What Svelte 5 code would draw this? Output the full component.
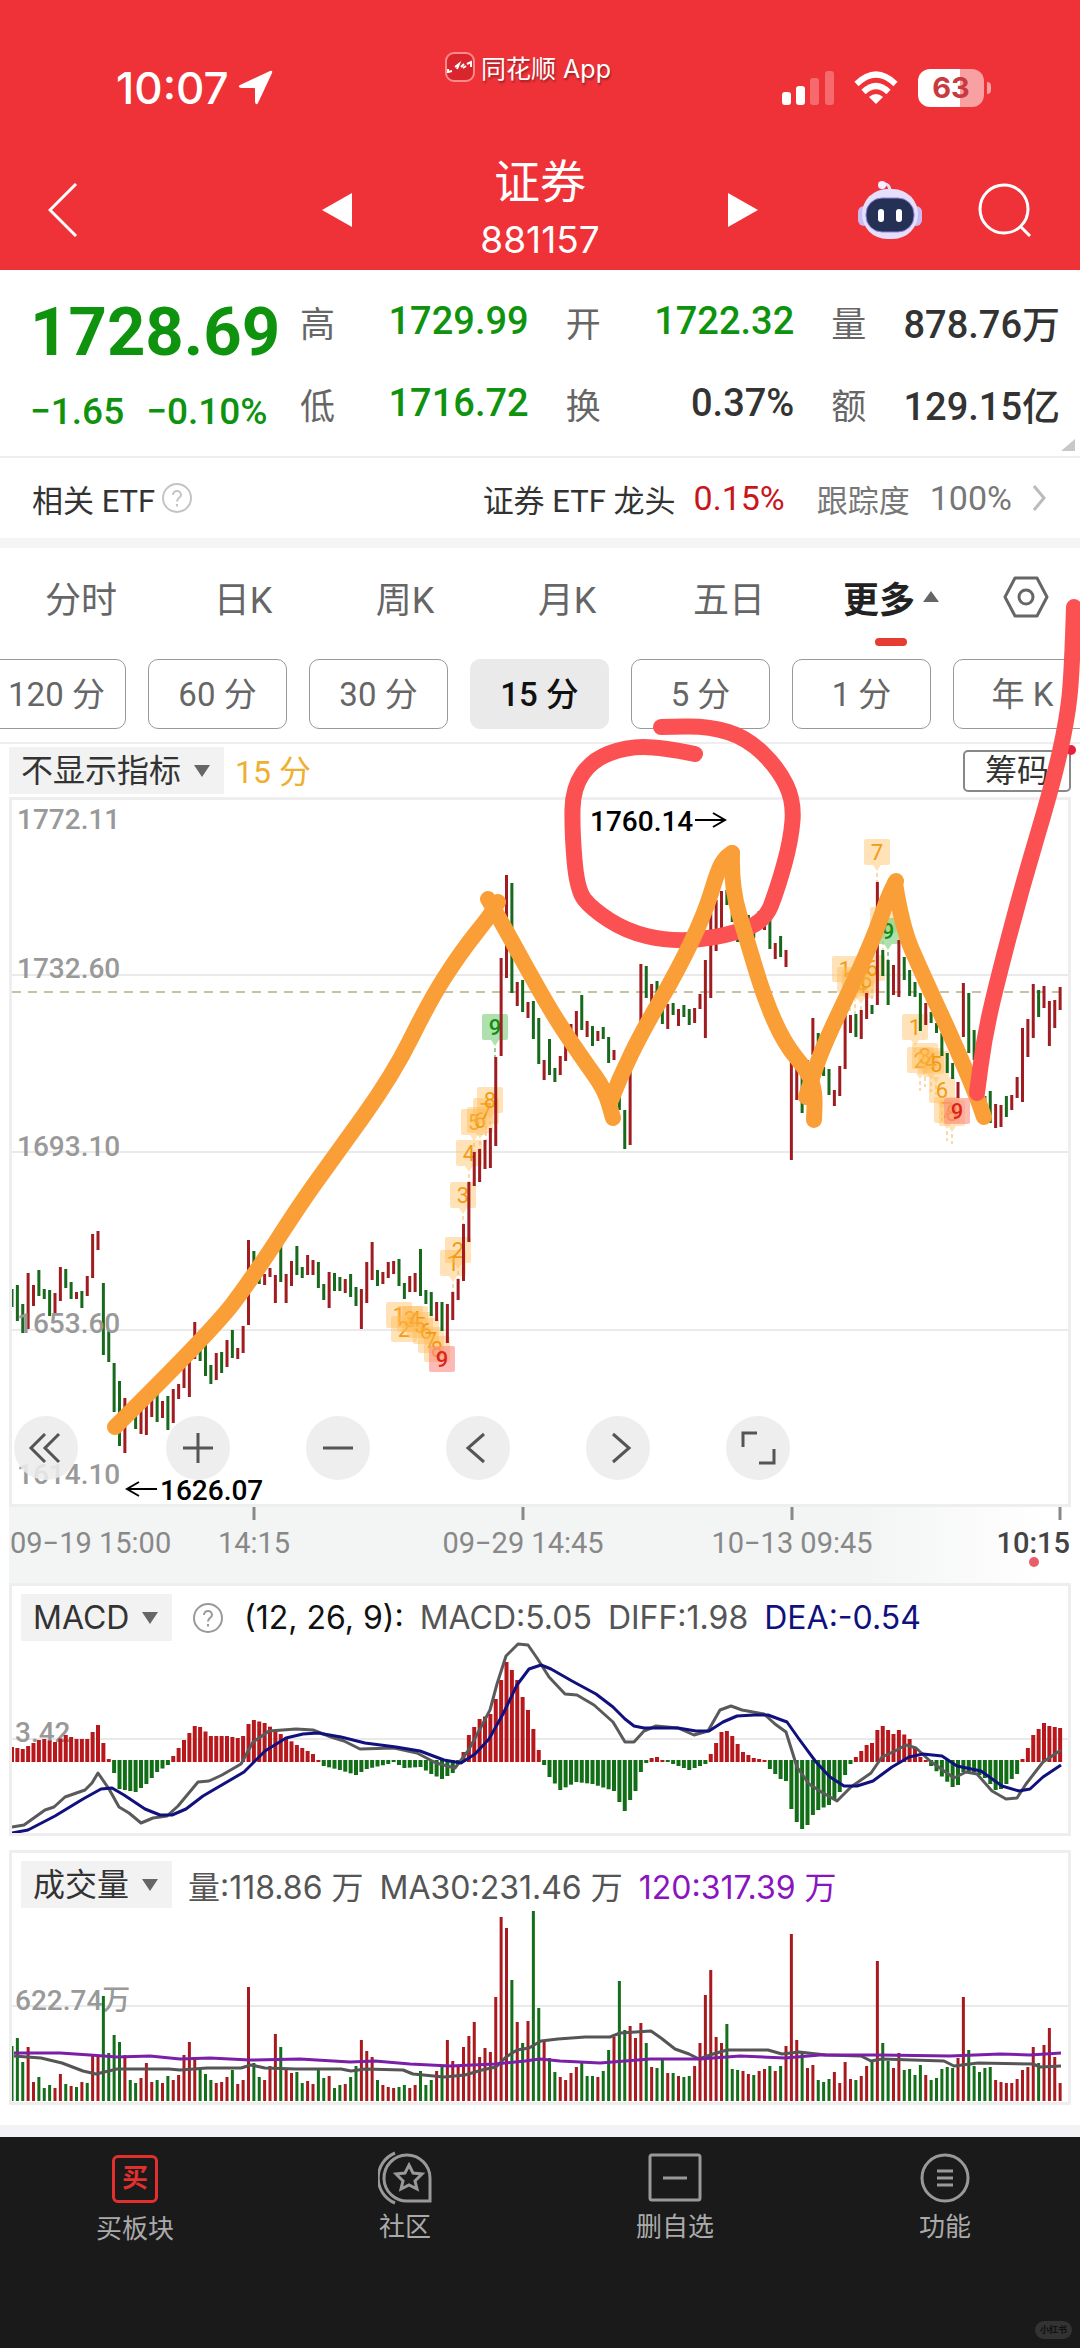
<script lang="ts">
  type Point = [number, number];

  const stats = [
    ['高', '1729.99', 'down'],
    ['开', '1722.32', 'down'],
    ['量', '878.76万', ''],
    ['低', '1716.72', 'down'],
    ['换', '0.37%', ''],
    ['额', '129.15亿', ''],
  ];

  const tabs = ['分时', '日K', '周K', '月K', '五日'];
  const periods = ['120 分', '60 分', '30 分', '15 分', '5 分', '1 分', '年 K'];
  let period: string = $state('15 分');

  // r = rising bar, g = falling bar, followed by top and bottom of the bar
  const candleData = `
    g1289-1307 g1285-1321 g1304-1333 r1273-1329 r1285-1306 g1270-1296 g1289-1299 g1290-1316 r1293-1313 r1267-1301
    g1269-1288 g1282-1299 r1292-1299 g1291-1308 r1276-1296 r1234-1278 r1231-1250 g1283-1355 g1331-1362 g1363-1412
    g1381-1446 r1398-1453 g1407-1420 g1408-1429 r1403-1434 r1395-1435 r1392-1417 g1393-1422 r1401-1418 g1396-1430
    r1389-1423 r1384-1399 r1357-1388 r1350-1397 r1322-1359 g1337-1361 g1345-1376 g1365-1384 r1353-1380 g1352-1373
    r1340-1367 g1330-1358 r1348-1359 r1326-1353 r1240-1325 g1251-1286 g1270-1284 r1274-1285 r1268-1277 r1275-1303
    g1240-1282 r1274-1303 r1261-1286 g1246-1275 g1267-1278 r1255-1275 r1260-1275 g1262-1288 g1284-1300 r1272-1308
    g1273-1291 g1277-1291 r1279-1293 g1274-1297 g1287-1306 r1289-1329 r1262-1303 r1242-1280 g1270-1286 r1272-1284
    r1262-1278 r1261-1274 g1259-1286 g1283-1299 r1276-1292 r1273-1292 g1249-1296 g1290-1304 g1292-1316 r1302-1321
    g1302-1331 r1304-1343 r1292-1320 r1279-1300 r1224-1281 r1182-1242 r1152-1186 r1149-1182 r1140-1169 r1128-1168
    r1057-1146 r958-1056 r875-978 g883-993 r982-1006 g980-1012 r1002-1018 g1001-1039 g1018-1064 r1060-1080
    g1039-1075 g1068-1082 r1056-1075 r1044-1061 r1024-1038 r1011-1037 g995-1030 r1021-1037 g1026-1046 r1031-1041
    g1027-1039 g1037-1063 r1050-1060 g1090-1110 g1110-1149 r1063-1145 r1033-1060 r964-1030 g966-998 r984-1010
    g981-1000 g993-1024 r1004-1029 g1003-1015 r1009-1026 g1005-1017 g1009-1025 r1008-1023 r994-1009 r960-1038
    r913-998 r900-951 r891-930 g890-905 g900-922 g926-942 g928-936 g915-933 g926-938 g911-930
    r915-930 g920-949 r943-959 g936-957 r950-967 r1043-1160 r1053-1100 g1070-1113 r1060-1080 r1018-1055
    g1033-1053 g1067-1076 g1069-1095 r1090-1106 r1066-1096 r1013-1069 r1015-1033 g1014-1037 r1010-1039 r993-1019
    g1005-1014 r882-1005 g950-976 g960-1005 r965-995 r940-997 g957-980 g970-996 g982-997 g993-1031
    r1003-1025 g1012-1023 g1023-1033 g1033-1056 g1053-1073 g1063-1079 r1082-1098 r983-1037 g993-1053 g1030-1060
    r1070-1090 g1096-1110 g1091-1123 r1104-1128 r1105-1127 g1096-1117 r1095-1110 r1077-1098 r1028-1102 r1019-1057
    r984-1038 g990-1017 r986-1008 r1001-1046 r1000-1028 r987-1010`;

  const volumeData = `
    g55 g63 g39 r54 r19 g24 g13 g16 r13 r27 g17 r15 g14 r19 g18 r45 r46 g105 g48 g66
    g59 r46 g21 g18 r23 r38 r19 g21 r18 g25 r21 r26 r46 r59 r44 g33 g27 g21 r18 r19
    r24 g31 r17 r21 r114 g38 g24 r21 r35 r67 g54 r33 r28 g29 g18 r20 r17 g31 g23 r25
    g13 g16 r17 g24 g35 r61 r50 r44 g21 r16 r14 r13 g14 g16 r13 r16 g30 g16 g21 r30
    g36 r61 r40 r35 r54 r65 r79 r44 r53 r49 r104 r184 r173 g121 r79 g58 r80 g190 g93 r61
    g43 g29 r24 r21 r28 r34 g38 g25 g25 r24 g30 g51 r64 g120 g71 r75 r63 r78 g58 r34
    g33 g41 r28 g28 r25 g24 g25 r35 r58 r106 r131 r64 r58 g77 g32 g31 r30 r27 g26 r30
    r32 g35 r30 g35 r55 r167 r61 g50 r33 r36 g21 g19 g22 r29 r18 r39 r22 g21 r25 r35
    g40 r140 g58 g40 r33 r48 g31 g32 g26 g36 r26 g21 g23 g32 g34 g33 r43 r104 g51
    g35 g29 g33 g34 r21 r19 r18 r18 r22 r31 r34 r54 g38 r56 r73 r44 r18`;

  // histogram turning points: bar index, height
  const macdKeys: Point[] = [
    [0, 14], [2, 12], [5, 21], [6, 22], [8, 19], [10, 26], [12, 22], [14, 22], [16, 36], [17, 18], [18, 2], [19, -12],
    [20, -28], [23, -31], [25, -23], [27, -11], [29, -4], [30, 5], [32, 21], [34, 35], [35, 34], [37, 25], [40, 25],
    [42, 23], [43, 25], [44, 37], [45, 41], [47, 38], [50, 27], [53, 16], [56, 7], [57, 1], [58, -5], [61, -9],
    [64, -14], [66, -8], [70, -3], [71, -1], [73, -7], [76, -6], [78, -13], [80, -18], [82, -12], [83, -3], [84, 9],
    [85, 26], [87, 42], [89, 47], [90, 62], [91, 81], [92, 99], [93, 91], [94, 81], [95, 64], [96, 51], [97, 32],
    [98, 11], [99, -4], [100, -16], [102, -29], [105, -21], [108, -23], [112, -30], [113, -41], [114, -50],
    [115, -39], [116, -30], [117, -11], [118, -2], [119, 3], [120, 4], [121, 1], [123, -3], [126, -9], [129, -3],
    [130, 7], [132, 29], [133, 30], [134, 25], [136, 9], [138, 3], [140, 1], [141, -8], [143, -18], [144, -20],
    [145, -48], [146, -61], [147, -68], [148, -64], [149, -54], [150, -49], [152, -44], [153, -39], [154, -31],
    [155, -14], [156, -3], [157, 4], [159, 16], [160, 18], [161, 31], [162, 35], [164, 27], [165, 31], [167, 22],
    [169, 4], [170, 1], [171, -5], [175, -26], [176, -24], [177, -11], [179, -11], [181, -17], [183, -29],
    [184, -28], [185, -23], [187, -13], [188, 2], [189, 13], [190, 26], [192, 38], [193, 35], [195, 33],
  ];

  const diff: Point[] = [
    [12, 1827], [24, 1825], [45, 1810], [54, 1807], [65, 1797], [85, 1790], [92, 1783], [98, 1773], [109, 1789],
    [119, 1807], [129, 1813], [141, 1823], [153, 1818], [167, 1816], [178, 1806], [198, 1782], [209, 1781],
    [222, 1775], [241, 1764], [253, 1742], [269, 1731], [296, 1729], [313, 1730], [331, 1737], [344, 1741],
    [360, 1749], [394, 1748], [417, 1753], [436, 1763], [455, 1768], [468, 1751], [480, 1729], [490, 1710],
    [497, 1684], [506, 1656], [518, 1644], [528, 1645], [537, 1658], [549, 1677], [565, 1694], [577, 1695],
    [594, 1705], [613, 1722], [625, 1742], [634, 1742], [644, 1731], [656, 1726], [678, 1728], [694, 1735],
    [708, 1731], [720, 1710], [731, 1706], [742, 1710], [764, 1714], [775, 1724], [786, 1732], [797, 1767],
    [809, 1784], [823, 1793], [837, 1801], [851, 1787], [871, 1773], [882, 1757], [895, 1751], [906, 1745],
    [916, 1748], [930, 1761], [954, 1778], [966, 1772], [977, 1774], [992, 1791], [1006, 1799], [1017, 1798],
    [1026, 1784], [1043, 1762], [1061, 1750],
  ];
  const dea: Point[] = [
    [12, 1833], [28, 1830], [55, 1816], [83, 1799], [101, 1789], [112, 1788], [124, 1795], [145, 1809], [160, 1815],
    [172, 1815], [186, 1809], [203, 1796], [244, 1772], [265, 1751], [286, 1738], [303, 1734], [318, 1733],
    [341, 1737], [365, 1743], [396, 1747], [420, 1751], [444, 1760], [461, 1763], [475, 1754], [489, 1739],
    [503, 1714], [517, 1685], [529, 1669], [541, 1665], [551, 1669], [572, 1681], [596, 1694], [613, 1707],
    [625, 1719], [634, 1726], [644, 1728], [678, 1728], [696, 1731], [709, 1731], [723, 1722], [737, 1716],
    [754, 1715], [768, 1715], [787, 1722], [799, 1739], [816, 1762], [830, 1777], [844, 1786], [857, 1786],
    [873, 1781], [892, 1767], [909, 1757], [923, 1754], [942, 1756], [957, 1766], [981, 1771], [1002, 1786],
    [1019, 1791], [1030, 1789], [1043, 1777], [1061, 1765],
  ];
  const ma30: Point[] = [
    [14, 2058], [41, 2060], [62, 2065], [83, 2073], [96, 2076], [117, 2071], [169, 2071], [180, 2072], [207, 2070],
    [241, 2070], [251, 2067], [265, 2070], [296, 2071], [341, 2071], [351, 2073], [365, 2071], [403, 2072],
    [413, 2076], [444, 2079], [465, 2077], [482, 2072], [496, 2069], [506, 2059], [517, 2052], [529, 2050],
    [541, 2043], [558, 2041], [585, 2039], [610, 2039], [620, 2035], [651, 2033], [661, 2040], [675, 2051],
    [689, 2056], [699, 2061], [713, 2056], [727, 2052], [768, 2052], [782, 2056], [799, 2054], [826, 2057],
    [861, 2058], [871, 2063], [882, 2061], [944, 2063], [954, 2068], [978, 2065], [1033, 2066], [1040, 2069],
    [1061, 2068],
  ];
  const ma120: Point[] = [
    [14, 2055], [60, 2055], [90, 2057], [117, 2059], [150, 2058], [180, 2061], [210, 2060], [250, 2062], [300, 2061],
    [350, 2064], [375, 2063], [410, 2066], [450, 2068], [495, 2066], [525, 2063], [540, 2061], [560, 2063],
    [600, 2065], [650, 2061], [700, 2061], [740, 2058], [785, 2060], [820, 2057], [880, 2057], [950, 2058],
    [1000, 2056], [1030, 2057], [1061, 2055],
  ];

  // nine-turn markers: left, top, count, kind
  const markers: [number, number, number, string][] = [
    [386, 1302, 1, 'mid'], [391, 1316, 2, 'mid'], [397, 1306, 3, 'mid'], [402, 1306, 4, 'mid'], [407, 1312, 5, 'mid'],
    [413, 1318, 6, 'mid'], [418, 1327, 7, 'mid'], [424, 1336, 8, 'mid'], [429, 1346, 9, 'low'],
    [440, 1250, 1, 'mid'], [445, 1237, 2, 'mid'], [450, 1182, 3, 'mid'], [456, 1140, 4, 'mid'], [461, 1109, 5, 'mid'],
    [467, 1107, 6, 'mid'], [473, 1098, 7, 'mid'], [477, 1087, 8, 'mid'], [482, 1014, 9, 'high'],
    [832, 956, 1, 'mid'], [837, 967, 2, 'mid'], [842, 970, 3, 'mid'], [848, 972, 4, 'mid'], [853, 967, 5, 'mid'],
    [859, 955, 6, 'mid'], [864, 839, 7, 'mid'], [870, 907, 8, 'mid'], [875, 918, 9, 'high'],
    [902, 1014, 1, 'mid'], [907, 1047, 2, 'mid'], [912, 1043, 3, 'mid'], [918, 1048, 4, 'mid'], [923, 1051, 5, 'mid'],
    [929, 1077, 6, 'mid'], [934, 1097, 7, 'mid'], [939, 1100, 8, 'mid'], [944, 1098, 9, 'low'],
  ];

  const ring: Point[] = [
    [695, 754], [661, 747], [626, 747], [592, 760], [573, 788], [572, 830], [577, 890], [592, 909], [626, 931],
    [667, 941], [712, 939], [764, 924], [778, 887], [791, 840], [794, 801], [778, 768], [747, 738], [709, 726],
    [661, 727],
  ];
  const rise: Point[] = [
    [1074, 607], [1072, 673], [1067, 720], [1053, 783], [1022, 887], [995, 990], [984, 1040], [977, 1093],
  ];
  const waves: Point[][] = [
    [[115, 1427], [213, 1330], [253, 1277], [303, 1200], [332, 1160], [393, 1075], [430, 1000], [461, 952], [492, 913], [498, 902]],
    [[488, 899], [497, 914], [540, 992], [561, 1027], [585, 1062], [605, 1090], [613, 1118]],
    [[611, 1100], [620, 1077], [643, 1030], [678, 970], [705, 913], [718, 870], [725, 858], [732, 853]],
    [[732, 853], [731, 887], [747, 940], [764, 997], [784, 1043], [809, 1073], [815, 1093], [814, 1120]],
    [[806, 1097], [812, 1077], [826, 1040], [850, 990], [874, 937], [888, 897], [896, 881]],
    [[895, 883], [902, 927], [922, 973], [953, 1040], [977, 1097], [984, 1117]],
  ];

  const barX = (i: number) => 12 + i * 5.375;

  const candles = candleData.trim().split(/\s+/).map((token, i) => {
    const [top, bottom] = token.slice(1).split('-').map(Number);
    return { x: barX(i), top, bottom, up: token[0] === 'r' };
  });

  const volumes = volumeData.trim().split(/\s+/).map((token, i) => ({
    x: barX(i),
    height: Number(token.slice(1)),
    up: token[0] === 'r',
  }));

  const histogram = candles.map((bar, i) => {
    const next = Math.max(1, macdKeys.findIndex((key) => key[0] >= i));
    const [x0, h0] = macdKeys[next - 1];
    const [x1, h1] = macdKeys[next];
    return { x: bar.x, height: h0 + ((h1 - h0) * (i - x0)) / (x1 - x0) };
  });

  function line(points: Point[]): string {
    return points.map((p) => p.join(',')).join(' ');
  }

  // Curve through the midpoints of the given points
  function smooth(points: Point[]): string {
    let d = `M${points[0][0]} ${points[0][1]}`;
    for (let i = 1; i < points.length - 1; i++) {
      const [x, y] = points[i];
      const [nx, ny] = points[i + 1];
      d += ` Q${x} ${y} ${(x + nx) / 2} ${(y + ny) / 2}`;
    }
    const last = points[points.length - 1];
    return `${d} L${last[0]} ${last[1]}`;
  }
</script>

{#snippet help()}
  <svg class="help" viewBox="0 0 32 32" aria-hidden="true">
    <circle cx="16" cy="16" r="14" />
    <path d="M12 13 C12 7.500 20 7.500 20 13 C20 16 16 15.500 16 19.500 M16 22 V24.500" />
  </svg>
{/snippet}

{#snippet caret()}
  <svg class="caret" viewBox="0 0 16 12" aria-hidden="true"><path d="M0 0H16L8 12Z" /></svg>
{/snippet}

<div class="page">
  <header>
    <div class="status">
      <div class="clock">
        <span>10:07</span>
        <svg width="36" height="36" viewBox="0 0 36 36" aria-hidden="true">
          <path d="M33 1Q36 0 35 3L21 33Q19 36 18 32V19Q18 18 17 18H4Q0 17 3 15Z" fill="#fff" />
        </svg>
      </div>
      <div class="source">
        <svg width="30" height="30" viewBox="0 0 30 30" aria-hidden="true">
          <rect x="1" y="1" width="28" height="28" rx="8" fill="#d9252d" stroke="#ff8a8a" stroke-width="2" />
          <path d="M3 20L7 19M10 15L14 12L12 17M16 15L19 12M18 16L21 14M22 12L26 10V15M3 17V21" stroke="#fff" stroke-width="2" fill="none" />
        </svg>
        <span>同花顺 App</span>
      </div>
      <div class="signals">
        <svg width="52" height="36" viewBox="0 0 52 36" aria-hidden="true">
          <rect x="0" y="22" width="9" height="13" rx="3" fill="#fff" />
          <rect x="14" y="16" width="9" height="19" rx="3" fill="#fff" />
          <rect x="28" y="8" width="9" height="27" rx="3" fill="#f66a6e" />
          <rect x="43" y="1" width="9" height="34" rx="3" fill="#f66a6e" />
        </svg>
        <svg width="44" height="34" viewBox="0 0 44 34" fill="none" stroke="#fff" stroke-width="6" aria-hidden="true">
          <path d="M2.500 13Q22 -6 41.500 13" />
          <path d="M9.500 21Q22 9 34.500 21" />
          <path d="M22 33L15 26Q22 20 29 26Z" fill="#fff" stroke="none" />
        </svg>
        <div class="battery"><span>63</span></div>
      </div>
    </div>
    <div class="titlebar">
      <button class="back" aria-label="返回">
        <svg width="30" height="54" viewBox="0 0 30 54"><path d="M28 1L2 27L28 53" fill="none" stroke="#fff" stroke-width="3" /></svg>
      </button>
      <div class="switcher">
        <button aria-label="上一个">
          <svg width="30" height="34" viewBox="0 0 30 34"><path d="M30 0V34L0 17Z" fill="#fff" /></svg>
        </button>
        <h1>证券<small>881157</small></h1>
        <button aria-label="下一个">
          <svg width="30" height="34" viewBox="0 0 30 34"><path d="M0 0V34L30 17Z" fill="#fff" /></svg>
        </button>
      </div>
      <div class="tools">
        <button aria-label="助手">
          <svg width="64" height="60" viewBox="0 0 64 60">
            <path d="M25 4Q32 3 32 12" fill="none" stroke="#e9dcfb" stroke-width="3" />
            <circle cx="24" cy="5" r="4" fill="#f7efff" />
            <rect x="0" y="26" width="12" height="20" rx="6" fill="#c9bbf4" />
            <rect x="52" y="26" width="12" height="20" rx="6" fill="#c9bbf4" />
            <rect x="4" y="9" width="56" height="50" rx="25" fill="#e6dffc" />
            <rect x="8" y="18" width="48" height="34" rx="16" fill="#243154" stroke="#8b82d8" stroke-width="1" />
            <rect x="20" y="29" width="6" height="13" rx="3" fill="#fff" />
            <rect x="38" y="29" width="6" height="13" rx="3" fill="#fff" />
          </svg>
        </button>
        <button aria-label="搜索">
          <svg width="54" height="54" viewBox="0 0 54 54" fill="none" stroke="#fff" stroke-width="3">
            <circle cx="26" cy="26" r="24" />
            <path d="M42 43L52 53" />
          </svg>
        </button>
      </div>
    </div>
  </header>

  <section class="quote">
    <div class="price">
      <strong>1728.69</strong>
      <div class="change"><span>−1.65</span><span>−0.10%</span></div>
    </div>
    <dl>
      {#each stats as [label, value, tone]}
        <div><dt>{label}</dt><dd class={tone}>{value}</dd></div>
      {/each}
    </dl>
    <svg class="corner" viewBox="0 0 14 12" aria-hidden="true"><path d="M14 0V12H0Z" fill="#c8c8c8" /></svg>
  </section>

  <a class="etf" href="#etf">
    <span class="dark">相关 ETF</span>
    {@render help()}
    <span class="dark lead">证券 ETF 龙头</span>
    <span class="rate">0.15%</span>
    <span>跟踪度</span>
    <span class="track">100%</span>
    <svg class="more" viewBox="0 0 14 28" aria-hidden="true"><path d="M2 2L12 14L2 26" /></svg>
  </a>

  <nav class="tabs">
    {#each tabs as tab}
      <button>{tab}</button>
    {/each}
    <button class="active">更多<svg width="16" height="11" viewBox="0 0 16 11" aria-hidden="true"><path d="M0 11H16L8 0Z" fill="#666" /></svg></button>
    <button class="settings" aria-label="设置">
      <svg width="46" height="42" viewBox="0 0 46 42" fill="none" stroke="#666" stroke-width="3">
        <path d="M12 2H34L44 21L34 40H12L2 21Z" stroke-linejoin="round" />
        <circle cx="23" cy="21" r="7" />
      </svg>
    </button>
  </nav>

  <div class="periods">
    {#each periods as name}
      <button class:selected={name === period} onclick={() => (period = name)}>{name}</button>
    {/each}
  </div>

  <div class="indicator">
    <div class="picker">
      <select aria-label="主图指标"><option>不显示指标</option></select>
      {@render caret()}
    </div>
    <span class="current">15 分</span>
    <button class="chips">筹码</button>
  </div>

  <section class="panel price-panel">
    <svg class="plot" viewBox="12 800 1056 704">
      <g class="grid">
        <path d="M12 975H1068M12 1152H1068M12 1330H1068" />
      </g>
      <path d="M12 992H1068" stroke="#c9c2a0" stroke-width="2" stroke-dasharray="9 7" />
      {#each markers as [x, y, count, kind]}
        <g class="marker {kind}">
          {#if kind !== 'low' && y < 1300}
            <path d="M{x + 9} {y + 26}H{x + 17}L{x + 13} {y + 32}Z" />
            <path class="stem" d="M{x + 13} {y + 34}V{y + 44}" />
          {/if}
          <rect {x} {y} width="26" height="26" rx="2" />
          <text x={x + 13} y={y + 21}>{count}</text>
        </g>
      {/each}
      {#each candles as bar}
        <rect x={bar.x - 1.5} y={bar.top} width="3" height={bar.bottom - bar.top} fill={bar.up ? '#a01c20' : '#17691b'} />
      {/each}
      <g class="scale">
        <text x="17" y="829">1772.11</text>
        <text x="17" y="978">1732.60</text>
        <text x="17" y="1156">1693.10</text>
        <text x="17" y="1333">1653.60</text>
        <text x="17" y="1484">1614.10</text>
      </g>
      <g class="extreme">
        <text x="590" y="831">1760.14</text>
        <path d="M695 820H725M713 813L725 820L713 827" />
        <text x="160" y="1500">1626.07</text>
        <path d="M157 1489H127M139 1482L127 1489L139 1496" />
      </g>
    </svg>
    <div class="controls">
      <button aria-label="收起"><svg viewBox="0 0 64 64"><path d="M31 18L17 32L31 46M45 18L31 32L45 46" /></svg></button>
      <button aria-label="放大"><svg viewBox="0 0 64 64"><path d="M17 32H47M32 17V47" /></svg></button>
      <button aria-label="缩小"><svg viewBox="0 0 64 64"><path d="M17 32H47" /></svg></button>
      <button aria-label="左移"><svg viewBox="0 0 64 64"><path d="M38 18L22 32L38 46" /></svg></button>
      <button aria-label="右移"><svg viewBox="0 0 64 64"><path d="M27 18L43 32L27 46" /></svg></button>
      <button aria-label="全屏"><svg viewBox="0 0 64 64"><path d="M17 31V17H31M33 47H48V33" /></svg></button>
    </div>
  </section>

  <svg class="axis" viewBox="9 1507 1062 76">
    <path d="M254 1507V1520M523 1507V1520M792 1507V1520M1060 1507V1520" stroke="#888" stroke-width="3" />
    <text x="10" y="1553">09−19 15:00</text>
    <text x="254" y="1553" text-anchor="middle">14:15</text>
    <text x="523" y="1553" text-anchor="middle">09−29 14:45</text>
    <text x="792" y="1553" text-anchor="middle">10−13 09:45</text>
    <text class="now" x="1070" y="1553" text-anchor="end">10:15</text>
    <circle cx="1034" cy="1562" r="5" fill="#e65f6a" />
  </svg>

  <section class="panel">
    <div class="legend">
      <div class="picker">
        <select aria-label="副图指标"><option>MACD</option></select>
        {@render caret()}
      </div>
      {@render help()}
      <span class="params">(12, 26, 9):</span>
      <span>MACD:5.05</span>
      <span>DIFF:1.98</span>
      <span class="dea">DEA:-0.54</span>
    </div>
    <svg class="plot" viewBox="12 1641 1056 192">
      <path class="grid" d="M12 1739H1068" />
      <g class="scale"><text x="15" y="1742">3.42</text></g>
      {#each histogram as bar}
        <rect
          x={bar.x - 2}
          y={bar.height > 0 ? 1761 - bar.height : 1760}
          width="4"
          height={Math.abs(bar.height) + 1}
          fill={bar.height > 0 ? '#b8181c' : '#116e16'}
        />
      {/each}
      <polyline points={line(diff)} stroke="#5a5a5a" />
      <polyline points={line(dea)} stroke="#10107e" />
    </svg>
  </section>

  <section class="panel volume">
    <div class="legend">
      <div class="picker">
        <select aria-label="成交量指标"><option>成交量</option></select>
        {@render caret()}
      </div>
      <span>量:118.86 万</span>
      <span>MA30:231.46 万</span>
      <span class="ma120">120:317.39 万</span>
    </div>
    <svg class="plot" viewBox="12 1910 1056 194">
      <path class="grid" d="M12 2008H1068" />
      <g class="scale"><text x="15" y="2012">622.74万</text></g>
      {#each volumes as bar}
        <rect x={bar.x - 1.5} y={2103 - bar.height} width="3" height={bar.height} fill={bar.up ? '#a9191d' : '#146f1a'} />
      {/each}
      <polyline points={line(ma30)} stroke="#555" />
      <polyline points={line(ma120)} stroke="#7b1fa8" />
    </svg>
  </section>

  <footer>
    <a class="buy" href="#buy">
      <span class="glyph">买</span>
      买板块
    </a>
    <a href="#community">
      <svg width="54" height="54" viewBox="0 0 54 54">
        <path d="M52 50H30A23 23 0 1 1 52 27Z" />
        <path d="M17 2A27 27 0 0 0 17 52" />
        <path d="M31 14L35 22L44 23L37 30L39 38L31 34L23 38L25 30L18 23L27 22Z" />
      </svg>
      社区
    </a>
    <a href="#remove">
      <svg width="54" height="54" viewBox="0 0 54 54"><rect x="2" y="4" width="50" height="45" rx="2" /><path d="M15 27H39" /></svg>
      删自选
    </a>
    <a href="#features">
      <svg width="54" height="54" viewBox="0 0 54 54"><circle cx="27" cy="27" r="23" /><path d="M19 20H35M19 27H35M19 34H35" /></svg>
      功能
    </a>
    <span class="badge">小红书</span>
  </footer>

  <svg class="notes" viewBox="0 0 1080 2348" aria-hidden="true">
    <circle cx="1071" cy="750" r="5" fill="#e8203c" />
    <path d={smooth(ring)} stroke="#fb5152" />
    {#each waves as wave}
      <path d={smooth(wave)} stroke="#fa9f38" />
    {/each}
    <path d={smooth(rise)} stroke="#fb5152" />
  </svg>
</div>

<style>
  :global(body) {
    margin: 0;
    background: #fff;
  }

  .page {
    position: relative;
    display: flex;
    flex-direction: column;
    min-height: 100vh;
    overflow: hidden;
    color: #333;
    font-family: Roboto, 'Noto Sans CJK SC', sans-serif;
  }

  button {
    padding: 0;
    border: 0;
    background: none;
    color: inherit;
    font: inherit;
    cursor: pointer;
  }

  svg {
    display: block;
    flex: none;
  }

  a {
    color: inherit;
    text-decoration: none;
  }

  header {
    height: 270px;
    background: #ef3138;
    color: #fff;
  }

  .status {
    display: grid;
    grid-template-columns: 1fr auto 1fr;
    align-items: center;
    height: 120px;
    padding: 56px 96px 0 116px;
    box-sizing: border-box;
    font-family: Inter, 'Noto Sans CJK SC', sans-serif;
  }

  .clock {
    display: flex;
    align-items: center;
    gap: 8px;
    font-size: 44px;
    font-weight: 500;
  }

  .source {
    display: flex;
    align-items: center;
    align-self: start;
    gap: 6px;
    height: 22px;
    margin-right: 44px;
    font-size: 25px;
    text-shadow: 1px 2px 2px rgba(0, 0, 0, 0.35);
  }

  .signals {
    display: flex;
    align-items: center;
    justify-content: flex-end;
    gap: 20px;
  }

  .battery {
    position: relative;
    width: 66px;
    border-radius: 12px;
    background: linear-gradient(90deg, #fff 63%, #f9a0a3 63%);
    color: #c93a40;
    font-size: 29px;
    font-weight: 700;
    line-height: 38px;
    text-align: center;
  }

  .battery::after {
    content: '';
    position: absolute;
    top: 13px;
    right: -7px;
    width: 4px;
    height: 12px;
    border-radius: 0 4px 4px 0;
    background: #f9a0a3;
  }

  .titlebar {
    display: grid;
    grid-template-columns: 1fr auto 1fr;
    align-items: center;
    height: 150px;
    padding: 0 48px;
  }

  .back {
    justify-self: start;
    padding-top: 30px;
  }

  .switcher {
    display: flex;
    align-items: center;
    justify-content: space-between;
    width: 436px;
  }

  .switcher button {
    padding-top: 30px;
  }

  h1 {
    margin: 0;
    padding-top: 30px;
    font-size: 46px;
    font-weight: 400;
    line-height: 60px;
    text-align: center;
  }

  h1 small {
    display: block;
    font-family: Inter, sans-serif;
    font-size: 37px;
    line-height: 56px;
  }

  .tools {
    display: flex;
    align-items: center;
    justify-content: flex-end;
    gap: 56px;
    padding-top: 30px;
  }

  .quote {
    position: relative;
    display: flex;
    height: 188px;
    border-bottom: 2px solid #eee;
    box-sizing: border-box;
  }

  .price {
    width: 300px;
    padding: 22px 0 0 30px;
    box-sizing: border-box;
    color: #0f930f;
    font-weight: 500;
  }

  .price strong {
    display: block;
    font-size: 67px;
    font-weight: 700;
    line-height: 80px;
  }

  .change {
    display: flex;
    gap: 22px;
    font-size: 37px;
    line-height: 80px;
  }

  dl {
    display: grid;
    flex: 1;
    grid-template-columns: 1fr 1fr 1fr;
    grid-auto-rows: 82px;
    column-gap: 37px;
    margin: 0;
    padding: 10px 20px 0 0;
  }

  dl div {
    display: flex;
    align-items: center;
    justify-content: space-between;
  }

  dt {
    color: #666;
    font-size: 35px;
  }

  dd {
    margin: 0;
    font-size: 38px;
    font-weight: 500;
    white-space: nowrap;
  }

  dd.down {
    color: #0f930f;
  }

  .corner {
    position: absolute;
    right: 5px;
    bottom: 5px;
    width: 14px;
  }

  .etf {
    display: flex;
    align-items: center;
    height: 80px;
    padding: 0 34px 0 32px;
    border-bottom: 10px solid #f5f5f5;
    color: #777;
    font-size: 31px;
  }

  .help {
    width: 32px;
    fill: none;
    stroke: #999;
    stroke-width: 2;
  }

  .etf .help {
    margin-left: 6px;
    stroke: #c4c4c4;
  }

  .dark {
    color: #333;
  }

  .lead {
    margin-left: auto;
  }

  .rate {
    margin: 0 32px 0 18px;
    color: #c8161d;
    font-size: 34px;
  }

  .track {
    margin: 0 20px;
    font-size: 34px;
  }

  .more {
    width: 14px;
    fill: none;
    stroke: #bbb;
    stroke-width: 3;
  }

  .tabs {
    display: grid;
    grid-template-columns: repeat(6, 3fr) 2fr;
    height: 102px;
    color: #666;
    font-size: 36px;
  }

  .tabs button {
    padding-bottom: 5px;
  }

  .tabs .active {
    position: relative;
    display: flex;
    align-items: center;
    justify-content: center;
    gap: 8px;
    color: #222;
    font-weight: 700;
  }

  .active::after {
    content: '';
    position: absolute;
    bottom: 4px;
    left: 50%;
    width: 32px;
    height: 8px;
    margin-left: -16px;
    border-radius: 4px;
    background: #e63c32;
  }

  .settings svg {
    margin: 0 auto;
  }

  .periods {
    display: flex;
    gap: 22px;
    height: 70px;
    margin: 9px 0 13px -13px;
  }

  .periods button {
    flex: 0 0 139px;
    padding-bottom: 5px;
    border: 1px solid #999;
    border-radius: 10px;
    box-sizing: border-box;
    color: #666;
    font-size: 33px;
  }

  .periods .selected {
    border-color: #eaeaea;
    background: #eaeaea;
    color: #111;
    font-weight: 500;
  }

  .indicator {
    display: flex;
    align-items: center;
    gap: 11px;
    height: 55px;
    padding: 0 9px;
    border-top: 2px solid #eee;
    box-sizing: border-box;
    font-size: 32px;
  }

  .picker {
    display: flex;
    align-items: center;
    gap: 12px;
    height: 47px;
    padding: 0 14px 0 12px;
    background: #f2f2f2;
  }

  .picker select {
    padding: 0;
    border: 0;
    appearance: none;
    background: none;
    color: #333;
    font: inherit;
    line-height: 46px;
  }

  .caret {
    width: 16px;
    fill: #666;
  }

  .current {
    padding-bottom: 4px;
    color: #efaf30;
  }

  .chips {
    height: 42px;
    margin-left: auto;
    padding: 0 20px;
    border: 2px solid #888;
    border-radius: 5px;
    font-size: 32px;
    line-height: 36px;
  }

  .panel {
    position: relative;
    margin: 0 9px;
    border: 3px solid #eee;
  }

  .volume {
    margin-top: 14px;
    margin-bottom: 20px;
  }

  .plot {
    width: 100%;
  }

  .plot polyline {
    fill: none;
    stroke-width: 3;
    stroke-linejoin: round;
  }

  .grid {
    stroke: #eaeaea;
    stroke-width: 2;
  }

  .scale {
    fill: #999;
    font-size: 28px;
    font-weight: 500;
  }

  .extreme {
    fill: #000;
    font-size: 28px;
    font-weight: 500;
  }

  .extreme path {
    fill: none;
    stroke: #000;
    stroke-width: 2;
  }

  .marker {
    font-size: 22px;
    text-anchor: middle;
  }

  .mid {
    fill: rgba(255, 186, 84, 0.42);
  }

  .mid .stem {
    stroke: #f0b45a;
  }

  .mid text {
    fill: #f29a14;
  }

  .stem {
    stroke: #2f9a35;
    stroke-width: 1;
    stroke-dasharray: 4 3;
  }

  .high {
    fill: rgba(110, 200, 110, 0.55);
  }

  .high text {
    fill: #0c8f12;
    font-weight: 500;
  }

  .low {
    fill: rgba(250, 140, 130, 0.6);
  }

  .low text {
    fill: #dc2418;
    font-weight: 500;
  }

  .controls {
    position: absolute;
    bottom: 24px;
    left: 2px;
    display: flex;
    gap: 76px;
  }

  .controls button {
    width: 64px;
    height: 64px;
    border-radius: 50%;
    background: rgba(236, 236, 236, 0.88);
  }

  .controls button:first-child {
    margin-right: 12px;
  }

  .controls path {
    fill: none;
    stroke: #555;
    stroke-width: 3;
  }

  .axis {
    margin: 0 9px;
    background: linear-gradient(90deg, #f3f4f4 80%, #fff 98%);
    fill: #888;
    font-size: 29px;
  }

  .axis .now {
    fill: #444;
    font-weight: 500;
  }

  .legend {
    display: flex;
    align-items: center;
    gap: 16px;
    height: 47px;
    padding: 8px 9px 0;
    color: #555;
    font-family: Inter, 'Noto Sans CJK SC', sans-serif;
    font-size: 32px;
    white-space: nowrap;
  }

  .legend .help {
    margin: 0 4px;
  }

  .params {
    color: #111;
  }

  .dea {
    color: #10107e;
  }

  .ma120 {
    color: #8a14c0;
  }

  footer {
    position: relative;
    display: grid;
    flex: 1;
    grid-template-columns: repeat(4, 1fr);
    min-height: 200px;
    border-top: 12px solid #f3f3f5;
    background: #1a1a1a;
    color: #aaa;
    font-size: 26px;
    line-height: 44px;
  }

  footer a {
    display: flex;
    flex-direction: column;
    align-items: center;
    padding-top: 14px;
  }

  footer svg {
    fill: none;
    stroke: #999;
    stroke-width: 3;
  }

  .glyph {
    width: 40px;
    height: 42px;
    margin: 4px 0;
    border: 3px solid #e2302f;
    border-radius: 6px;
    color: #e2302f;
    font-weight: 700;
    line-height: 40px;
    text-align: center;
  }

  .badge {
    position: absolute;
    right: 8px;
    bottom: 9px;
    padding: 0 5px;
    border-radius: 9px;
    background: #333;
    color: #111;
    font-size: 9px;
    font-weight: 700;
    line-height: 18px;
  }

  .notes {
    position: absolute;
    top: 0;
    left: 0;
    width: 100%;
    pointer-events: none;
  }

  .notes path {
    fill: none;
    stroke-width: 16;
    stroke-linecap: round;
    stroke-linejoin: round;
  }
</style>
